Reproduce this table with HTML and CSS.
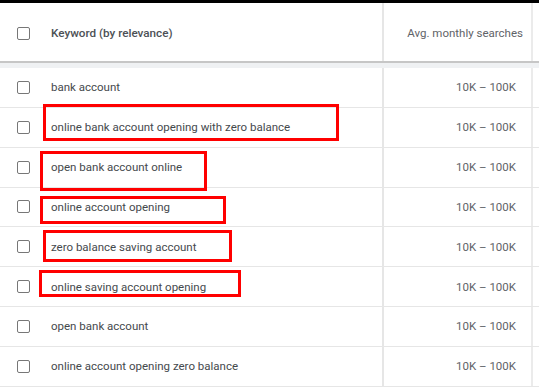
FILE: index.html
```html
<!DOCTYPE html>
<html lang="en">

<head>
    <meta charset="utf-8">
    <meta name="viewport" content="width=device-width, initial-scale=1.0">
    <title>Keyword ideas</title>
    <link rel="stylesheet" href="styles.css">
</head>

<body>

    <div class="topbar"></div>

    <section class="tabel">
        <div class="hoved">
            <div class="celle boks"><span class="tjek"></span></div>
            <div class="celle ord">Keyword (by relevance)</div>
            <div class="celle tal">Avg. monthly searches</div>
            <div class="celle rest"></div>
        </div>
        <div class="band"></div>

        <div class="raekke">
            <div class="celle boks"><span class="tjek"></span></div>
            <div class="celle ord">bank account</div>
            <div class="celle tal">10K – 100K</div>
            <div class="celle rest"></div>
        </div>
        <div class="raekke">
            <div class="celle boks"><span class="tjek"></span></div>
            <div class="celle ord">online bank account opening with zero balance</div>
            <div class="celle tal">10K – 100K</div>
            <div class="celle rest"></div>
        </div>
        <div class="raekke">
            <div class="celle boks"><span class="tjek"></span></div>
            <div class="celle ord">open bank account online</div>
            <div class="celle tal">10K – 100K</div>
            <div class="celle rest"></div>
        </div>
        <div class="raekke">
            <div class="celle boks"><span class="tjek"></span></div>
            <div class="celle ord">online account opening</div>
            <div class="celle tal">10K – 100K</div>
            <div class="celle rest"></div>
        </div>
        <div class="raekke">
            <div class="celle boks"><span class="tjek"></span></div>
            <div class="celle ord">zero balance saving account</div>
            <div class="celle tal">10K – 100K</div>
            <div class="celle rest"></div>
        </div>
        <div class="raekke">
            <div class="celle boks"><span class="tjek"></span></div>
            <div class="celle ord">online saving account opening</div>
            <div class="celle tal">10K – 100K</div>
            <div class="celle rest"></div>
        </div>
        <div class="raekke">
            <div class="celle boks"><span class="tjek"></span></div>
            <div class="celle ord">open bank account</div>
            <div class="celle tal">10K – 100K</div>
            <div class="celle rest"></div>
        </div>
        <div class="raekke">
            <div class="celle boks"><span class="tjek"></span></div>
            <div class="celle ord">online account opening zero balance</div>
            <div class="celle tal">10K – 100K</div>
            <div class="celle rest"></div>
        </div>

        <!-- red markings drawn over the table -->
        <div class="mark m1"></div>
        <div class="mark m2"></div>
        <div class="mark m3"></div>
        <div class="mark m4"></div>
        <div class="mark m5"></div>
    </section>

</body>

</html>
```

FILE: styles.css
```css
body {
    margin: 0;
    background: #fff;
    font-family: Roboto, "Liberation Sans", sans-serif;
    overflow: hidden;
}

.topbar {
    height: 3px;
    background: #000;
}

.tabel {
    position: relative;
}

.hoved,
.raekke {
    display: grid;
    grid-template-columns: 40px 342px 151px 1fr;
}

.hoved {
    height: 58px;
    border-bottom: 2px solid #c6c6c6;
}

.hoved .celle {
    padding-top: 2px;
    box-sizing: border-box;
}

.band {
    height: 5px;
    background: #eff1f3;
}

.raekke {
    height: 38.85px;
    border-bottom: 1px solid #e6e6e6;
}

.celle {
    display: flex;
    align-items: center;
}

.boks {
    justify-content: center;
    padding-left: 6px;
    box-sizing: border-box;
}

.tjek {
    width: 11px;
    height: 11px;
    border: 1.5px solid #777;
    border-radius: 2px;
}

.ord {
    padding-left: 11px;
    font-size: 11.5px;
    color: #45494d;
}

.hoved .ord {
    font-size: 11.7px;
    font-weight: 500;
    color: #4d5156;
}

.tal {
    justify-content: flex-end;
    padding-right: 15px;
    font-size: 11.5px;
    color: #5f6368;
    border-left: 2px solid #e6e6e6;
    border-right: 2px solid #ebebeb;
}

.hoved .tal {
    padding-right: 8px;
    font-size: 11.5px;
    color: #5f6368;
}

.mark {
    position: absolute;
    border: 3px solid #ff0000;
    box-sizing: border-box;
}

.m1 {
    left: 43px;
    top: 101px;
    width: 296px;
    height: 37px;
}

.m2 {
    left: 40px;
    top: 148px;
    width: 167px;
    height: 40px;
}

.m3 {
    left: 40px;
    top: 193px;
    width: 186px;
    height: 28px;
}

.m4 {
    left: 43px;
    top: 227px;
    width: 189px;
    height: 32px;
}

.m5 {
    left: 39px;
    top: 267px;
    width: 202px;
    height: 27px;
}
```
